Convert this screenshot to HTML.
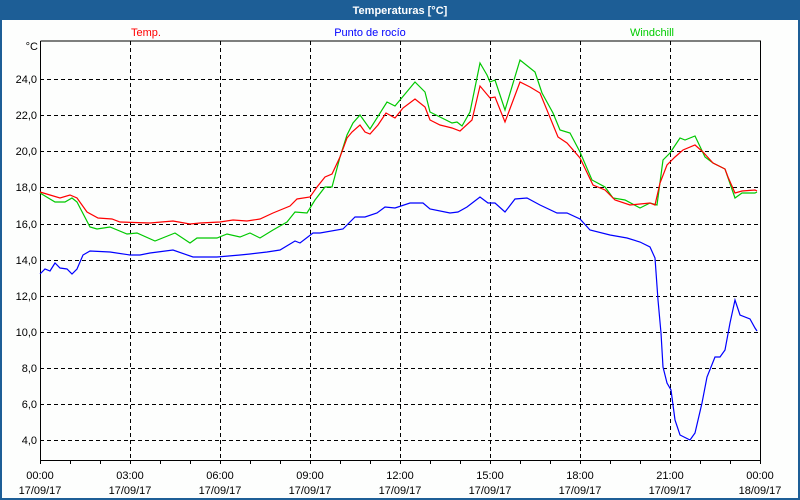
<!DOCTYPE html>
<html><head><meta charset="utf-8"><style>
html,body{margin:0;padding:0;width:800px;height:500px;overflow:hidden;background:#fff}
svg{display:block}
text{font-family:"Liberation Sans","DejaVu Sans",sans-serif;font-size:11px}
</style></head><body>
<svg width="800" height="500" xmlns="http://www.w3.org/2000/svg">
<rect x="0" y="0" width="800" height="500" fill="#1d5e96"/>
<rect x="2" y="20" width="796" height="478" fill="#fdfefd"/>
<text x="400" y="14" text-anchor="middle" fill="#fff" font-weight="bold" font-size="12">Temperaturas [°C]</text>
<text x="146" y="36" text-anchor="middle" fill="#ff0000">Temp.</text>
<text x="370" y="36" text-anchor="middle" fill="#0000ff">Punto de rocío</text>
<text x="652" y="36" text-anchor="middle" fill="#00cc00">Windchill</text>
<text x="38" y="50" text-anchor="end" fill="#000">°C</text>
<g stroke="#000" stroke-width="1" stroke-dasharray="4,3" shape-rendering="crispEdges">
<line x1="40" y1="79.5" x2="760" y2="79.5"/><line x1="40" y1="115.5" x2="760" y2="115.5"/>
<line x1="40" y1="151.5" x2="760" y2="151.5"/><line x1="40" y1="187.5" x2="760" y2="187.5"/>
<line x1="40" y1="224.5" x2="760" y2="224.5"/><line x1="40" y1="260.5" x2="760" y2="260.5"/>
<line x1="40" y1="296.5" x2="760" y2="296.5"/><line x1="40" y1="332.5" x2="760" y2="332.5"/>
<line x1="40" y1="368.5" x2="760" y2="368.5"/><line x1="40" y1="404.5" x2="760" y2="404.5"/>
<line x1="40" y1="440.5" x2="760" y2="440.5"/>
<line x1="130.5" y1="41" x2="130.5" y2="460"/><line x1="220.5" y1="41" x2="220.5" y2="460"/>
<line x1="310.5" y1="41" x2="310.5" y2="460"/><line x1="400.5" y1="41" x2="400.5" y2="460"/>
<line x1="490.5" y1="41" x2="490.5" y2="460"/><line x1="580.5" y1="41" x2="580.5" y2="460"/>
<line x1="670.5" y1="41" x2="670.5" y2="460"/>
</g>
<g fill="#000" text-anchor="end">
<text x="37" y="83">24,0</text><text x="37" y="119">22,0</text><text x="37" y="155">20,0</text>
<text x="37" y="191">18,0</text><text x="37" y="228">16,0</text><text x="37" y="264">14,0</text>
<text x="37" y="300">12,0</text><text x="37" y="336">10,0</text><text x="37" y="372">8,0</text>
<text x="37" y="408">6,0</text><text x="37" y="444">4,0</text>
</g>
<path d="M40.5 41v419.5h720V41H40.5" fill="none" stroke="#000" stroke-width="1" shape-rendering="crispEdges"/>
<g stroke="#000" shape-rendering="crispEdges">
<path d="M70.5 460v4M100.5 460v4M130.5 460v4M160.5 460v4M190.5 460v4M220.5 460v4M250.5 460v4M280.5 460v4M310.5 460v4M340.5 460v4M370.5 460v4M400.5 460v4M430.5 460v4M460.5 460v4M490.5 460v4M520.5 460v4M550.5 460v4M580.5 460v4M610.5 460v4M640.5 460v4M670.5 460v4M700.5 460v4M730.5 460v4M40.5 460v4M760.5 460v4"/>
</g>
<g fill="#000" text-anchor="middle">
<text x="40" y="479">00:00</text><text x="40" y="494">17/09/17</text>
<text x="130" y="479">03:00</text><text x="130" y="494">17/09/17</text>
<text x="220" y="479">06:00</text><text x="220" y="494">17/09/17</text>
<text x="310" y="479">09:00</text><text x="310" y="494">17/09/17</text>
<text x="400" y="479">12:00</text><text x="400" y="494">17/09/17</text>
<text x="490" y="479">15:00</text><text x="490" y="494">17/09/17</text>
<text x="580" y="479">18:00</text><text x="580" y="494">17/09/17</text>
<text x="670" y="479">21:00</text><text x="670" y="494">17/09/17</text>
<text x="760" y="479">00:00</text><text x="760" y="494">18/09/17</text>
</g>
<g fill="none" stroke-width="1.2">
<polyline stroke="#0000ff" points="40,274 45,269 50,271 55,263 60,268 67,269 72,274 77,269 83,255 90,251 110,252 130,255 140,255 150,253 173,250 193,257 203,257 217,257 240,255 250,254 267,252 280,250 295,241 300,243 313,233 320,233 343,229 355,217 365,217 377,213 385,207 395,208 410,203 423,203 430,209 450,213 458,212 467,207 480,197 488,203 495,203 505,212 515,199 527,198 540,205 557,213 567,213 580,219 590,230 610,235 627,238 640,242 650,247 655,258 658,300 661,333 663,367 667,383 671,390 675,420 680,435 690,440 695,433 702,403 707,377 715,357 720,357 725,350 730,323 735,300 740,315 750,319 755,328 757,331"/>
<polyline stroke="#00c800" points="40,193 55,202 65,202 72,198 77,202 90,227 97,229 110,227 127,234 137,233 155,241 175,233 190,243 197,238 217,238 227,234 240,237 250,233 260,238 273,230 287,222 295,212 307,213 315,200 325,187 332,187 340,157 347,135 353,123 360,115 370,129 387,102 395,106 415,82 425,92 430,112 440,117 452,123 457,122 462,126 470,112 480,63 487,75 490,82 495,80 505,110 520,60 535,72 542,93 553,113 560,130 570,133 580,152 592,180 605,187 613,198 625,200 640,208 650,203 657,205 663,160 670,153 680,138 685,140 695,136 705,157 713,163 725,169 735,198 742,193 755,193 757,192"/>
<polyline stroke="#ff0000" points="40,192 50,195 60,198 70,195 77,198 87,212 98,218 112,219 120,222 150,223 173,221 190,224 200,223 220,222 233,220 247,221 260,219 273,213 290,206 297,199 310,197 317,187 325,177 332,174 340,157 347,138 352,132 360,125 365,132 370,134 378,125 386,113 395,118 403,108 415,99 425,107 430,120 440,125 452,128 460,131 472,120 480,86 490,98 495,97 505,122 520,82 530,87 540,93 558,137 567,143 580,158 593,185 605,190 615,200 630,205 650,203 655,205 660,183 667,165 675,157 683,150 695,145 703,152 713,163 725,169 728,177 735,193 742,191 755,190 757,191"/>
</g>
</svg>
</body></html>
